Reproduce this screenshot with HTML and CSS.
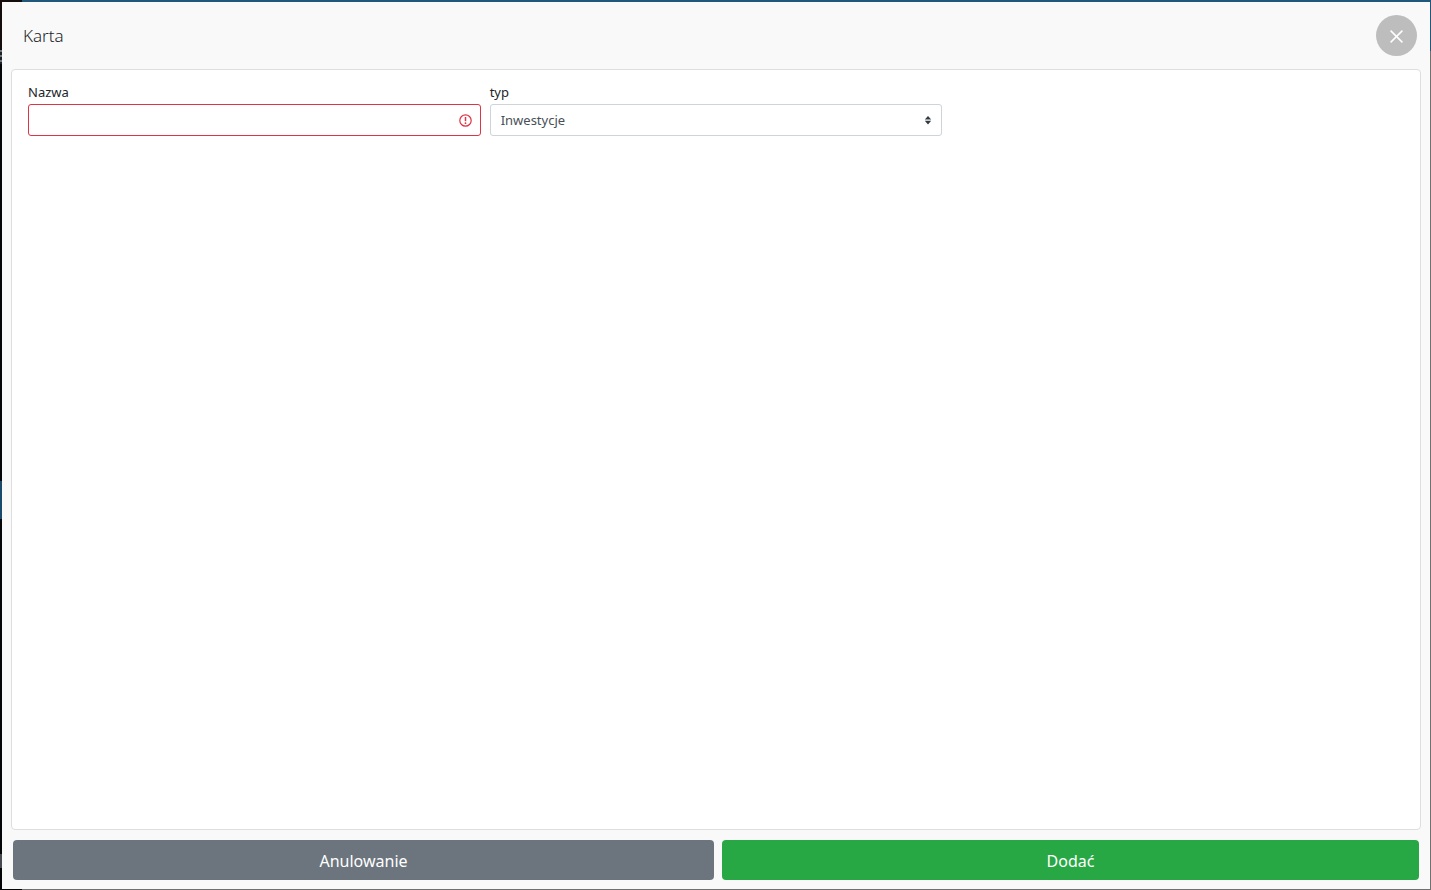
FILE: index.html
```html
<!DOCTYPE html>
<html lang="pl">
<head>
    <meta charset="UTF-8">
    <meta name="viewport" content="width=device-width, initial-scale=1.0">
    <title>Karta</title>
    <link rel="stylesheet" href="styles.css">
</head>
<body>
    <!-- Page behind the modal -->
    <div class="page" aria-hidden="true">
        <div class="sidebar">
            <div class="sidebar-brand"></div>
            <div class="sidebar-user"></div>
            <div class="sidebar-space above"></div>
            <div class="sidebar-active"></div>
            <div class="sidebar-space below"></div>
            <div class="sidebar-bottom"></div>
        </div>
        <div class="page-main">
            <div class="topbar"></div>
        </div>
    </div>

    <!-- Modal -->
    <form class="modal" role="dialog" aria-labelledby="modalTitle" novalidate>
        <div class="modal-header">
            <h1 class="modal-title" id="modalTitle">Karta</h1>
            <button type="button" class="close-btn" aria-label="Zamknij">
                <svg width="13" height="13" viewBox="0 0 13 13" fill="none" stroke="#fff" stroke-width="1.5">
                    <path d="M.6.6l11.8 11.8M12.4.6L.6 12.4"/>
                </svg>
            </button>
        </div>

        <div class="modal-body">
            <div class="field">
                <label for="nazwa">Nazwa</label>
                <div class="control">
                    <input type="text" class="form-control invalid" id="nazwa" aria-invalid="true">
                    <svg class="control-icon" width="13" height="13" viewBox="0 0 13 13" fill="none" stroke="#dc3545">
                        <circle cx="6.5" cy="6.5" r="5.7" stroke-width="1.2"/>
                        <path d="M6.5 3v4.2" stroke-width="1.5"/>
                        <circle cx="6.5" cy="9.2" r=".9" fill="#dc3545" stroke="none"/>
                    </svg>
                </div>
            </div>
            <div class="field">
                <label for="typ">typ</label>
                <div class="control">
                    <select class="form-control" id="typ">
                        <option>Inwestycje</option>
                    </select>
                    <svg class="control-icon arrows" width="8" height="10" viewBox="0 0 4 5" fill="#343a40">
                        <path d="M2 .5L.4 2.2h3.2zm0 4.3L.4 2.9h3.2z"/>
                    </svg>
                </div>
            </div>
        </div>

        <div class="modal-footer">
            <button type="button" class="btn btn-secondary">Anulowanie</button>
            <button type="submit" class="btn btn-success">Dodać</button>
        </div>
    </form>
</body>
</html>
```
FILE: styles.css
```css
* {
    box-sizing: border-box;
}

body {
    margin: 0;
    font-family: "Noto Sans", "Open Sans", sans-serif;
    font-size: 13px;
    line-height: 20px;
    color: #212529;
}

/* Page behind */
.page {
    display: flex;
    height: 100vh;
    background: #707070;
}

.sidebar {
    display: flex;
    flex-direction: column;
    width: 22px;
    background: #050607;
}

.sidebar-brand {
    height: 50px;
    background: #130d0c;
}

.sidebar-user {
    height: 14px;
    background: repeating-linear-gradient(#70757a 0, #70757a 2px, #1c2228 2px, #1c2228 5px);
}

.sidebar-space.above {
    flex: 417;
}

.sidebar-space.below {
    flex: 335;
}

.sidebar-active {
    height: 38px;
    background: #174a6c;
}

.sidebar-bottom {
    height: 36px;
    background: linear-gradient(#444a50 14px, #050607 14px);
}

.page-main {
    flex: 1;
}

.topbar {
    height: 51px;
    background: #20587c;
}

/* Modal */
.modal {
    position: fixed;
    inset: 2px 1px 1px 2px;
    display: flex;
    flex-direction: column;
    background: #f9f9f9;
}

.modal-header {
    display: flex;
    align-items: center;
    justify-content: space-between;
    padding: 13px 13px 13px 21px;
}

.modal-title {
    margin: 0;
    font-size: 17px;
    font-weight: 300;
    line-height: 24px;
}

.close-btn {
    display: flex;
    align-items: center;
    justify-content: center;
    width: 41px;
    height: 41px;
    padding: 2px 0 0;
    border: none;
    border-radius: 50%;
    background: #bdbdbd;
    cursor: pointer;
}

.modal-body {
    flex: 1;
    display: grid;
    grid-template-columns: repeat(3, 1fr);
    align-content: start;
    gap: 9px;
    margin: 0 9px;
    padding: 12px 16px;
    border: 1px solid #dedede;
    border-radius: 4px;
    background: #fff;
}

.field label {
    display: block;
    margin-bottom: 2px;
}

.control {
    position: relative;
}

.form-control {
    display: block;
    width: 100%;
    height: 32px;
    padding: 0 28px 0 10px;
    border: 1px solid #ced4da;
    border-radius: 3px;
    background: #fff;
    color: #495057;
    font: inherit;
    appearance: none;
    outline: none;
}

.form-control.invalid {
    border-color: #dc3545;
}

.control-icon {
    position: absolute;
    top: 10px;
    right: 9px;
    pointer-events: none;
}

.control-icon.arrows {
    top: 11px;
    right: 10px;
}

.modal-footer {
    display: grid;
    grid-template-columns: 701fr 697fr;
    gap: 8px;
    padding: 10px 11px 9px;
}

.btn {
    height: 40px;
    padding: 2px 16px 0;
    border: none;
    border-radius: 4px;
    color: #fff;
    font: inherit;
    font-size: 16px;
    cursor: pointer;
}

.btn-secondary {
    background: #6c757d;
}

.btn-success {
    background: #28a745;
}
```
